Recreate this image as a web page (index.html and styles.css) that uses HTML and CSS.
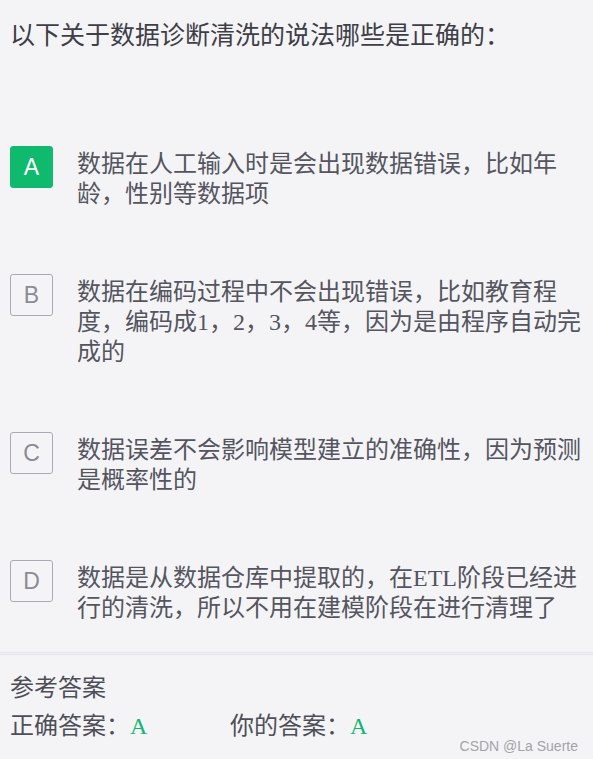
FILE: index.html
```html
<!DOCTYPE html>
<html lang="zh-CN">
<head>
    <meta charset="UTF-8">
    <meta name="viewport" content="width=device-width, initial-scale=1.0">
    <title>数据诊断清洗</title>
    <link rel="stylesheet" href="styles.css">
</head>
<body>

<div class="question">以下关于数据诊断清洗的说法哪些是正确的：</div>

<div class="options">
    <div class="option">
        <div class="badge active">A</div>
        <div class="option-text">数据在人工输入时是会出现数据错误，比如年龄，性别等数据项</div>
    </div>
    <div class="option">
        <div class="badge">B</div>
        <div class="option-text">数据在编码过程中不会出现错误，比如教育程度，编码成1，2，3，4等，因为是由程序自动完成的</div>
    </div>
    <div class="option">
        <div class="badge">C</div>
        <div class="option-text">数据误差不会影响模型建立的准确性，因为预测是概率性的</div>
    </div>
    <div class="option">
        <div class="badge">D</div>
        <div class="option-text">数据是从数据仓库中提取的，在ETL阶段已经进行的清洗，所以不用在建模阶段在进行清理了</div>
    </div>
</div>

<!-- 参考答案 -->
<div class="answer">
    <div class="answer-title">参考答案</div>
    <div class="answer-row">
        <span class="answer-item">正确答案：<span class="answer-value">A</span></span>
        <span class="answer-item">你的答案：<span class="answer-value">A</span></span>
    </div>
</div>

<div class="watermark">CSDN @La Suerte</div>

</body>
</html>
```

FILE: styles.css
```css
html, body {
    height: 100%;
}

body {
    position: relative;
    margin: 0;
    padding: 0 10px;
    box-sizing: border-box;
    background: #f4f4f7;
    font-family: "Liberation Serif", "Noto Sans CJK SC", serif;
    color: #55555f;
    overflow: hidden;
}

.question {
    margin-top: 17px;
    font-family: "Noto Sans CJK SC", sans-serif;
    font-size: 25px;
    line-height: 33px;
    color: #3e3e47;
}

.options {
    margin-top: 96px;
}

.option {
    display: flex;
    align-items: flex-start;
}

.option + .option {
    margin-top: 65px;
}

.badge {
    flex: none;
    width: 43px;
    height: 42px;
    box-sizing: border-box;
    border: 1px solid #a9a9b4;
    border-radius: 3px;
    display: flex;
    justify-content: center;
    align-items: center;
    font-family: "Liberation Sans", sans-serif;
    font-size: 23px;
    color: #8b8b95;
}

.badge.active {
    background: #0fba6e;
    border-color: #0fba6e;
    color: #fff;
}

.option-text {
    margin-left: 24px;
    padding-top: 3px;
    font-size: 24px;
    line-height: 30px;
}

/* 参考答案 */
.answer {
    margin: 29px -10px 0;
    padding: 18px 10px 0;
    border-top: 3px double #e3e1ec;
    font-size: 24px;
    line-height: 30px;
    color: #4e4e58;
}

.answer-row {
    display: flex;
    margin-top: 8px;
}

.answer-item {
    min-width: 220px;
}

.answer-value {
    color: #12b672;
}

.watermark {
    position: absolute;
    right: 15px;
    bottom: 5px;
    font-family: "Liberation Sans", sans-serif;
    font-size: 14px;
    color: #a3a3a8;
}
```
